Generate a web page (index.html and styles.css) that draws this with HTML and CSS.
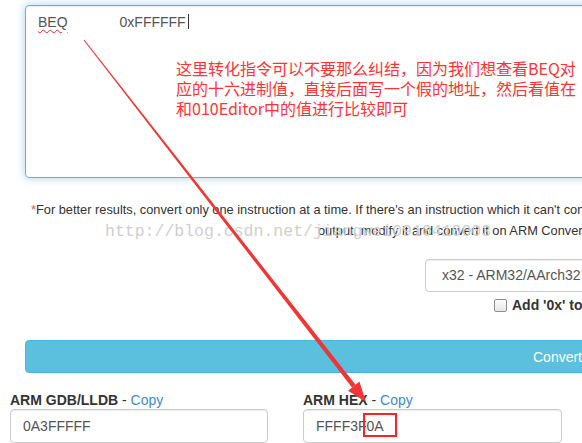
FILE: index.html
```html
<!DOCTYPE html>
<html lang="zh-CN">
<head>
<meta charset="utf-8">
<title>ARM Converter</title>
<link rel="stylesheet" href="styles.css">
</head>
<body>
<div class="page">
  <div class="editor">
    <div class="code"><span class="misspelled">BEQ</span><span class="operand">0xFFFFFF</span><span class="caret"></span></div>
  </div>
  <div class="tip">
    <div class="tip-line first"><span class="star">*</span>For better results, convert only one instruction at a time. If there's an instruction which it can't convert, please try to convert it in another way and check the</div>
    <div class="tip-line second">output, modify it and convert it on ARM Converter again.</div>
  </div>
  <div class="options">
    <div class="select">x32 - ARM32/AArch32</div>
    <label class="check"><span class="box"></span>Add '0x' to the output</label>
  </div>
  <button class="convert">Convert</button>
  <div class="results">
    <div class="field">
      <div class="label"><b>ARM GDB/LLDB</b> - <a class="copy">Copy</a></div>
      <div class="output">0A3FFFFF</div>
    </div>
    <div class="field">
      <div class="label"><b>ARM HEX</b> - <a class="copy">Copy</a></div>
      <div class="output">FFFF3F<span class="mark">0A</span></div>
    </div>
  </div>
</div>
<div class="watermark">http://blog.csdn.net/jiangwei0910410003</div>
<div class="note">这里转化指令可以不要那么纠结，因为我们想查看BEQ对<br>应的十六进制值，直接后面写一个假的地址，然后看值在<br>和010Editor中的值进行比较即可</div>
<svg class="arrow" width="582" height="443" viewBox="0 0 582 443">
  <polygon points="84.4,39.7 83.6,40.3 352.0,387.6 355.6,384.7" fill="#f03535"/>
  <polygon points="366,402 359.4,381.6 348.0,390.8" fill="#f03535"/>
</svg>
</body>
</html>
```
FILE: styles.css
```css
html, body {
  margin: 0;
  padding: 0;
  overflow: hidden;
  background: #fff;
  font-family: "Liberation Sans", Arial, sans-serif;
}
body {
  width: 582px;
  height: 443px;
}
.page {
  width: 582px;
  height: 443px;
  overflow: hidden;
}
.editor {
  margin: 5px 0 0 25px;
  width: 700px;
  height: 173px;
  box-sizing: border-box;
  border: 1px solid #66afe9;
  border-radius: 4px;
  box-shadow: inset 0 1px 1px rgba(0,0,0,.075), 0 0 8px rgba(102,175,233,.6);
  padding: 6px 12px;
  font-size: 14px;
  line-height: 20px;
  color: #555;
}
.code {
  white-space: nowrap;
}
.misspelled {
  text-decoration: underline wavy #e22;
  text-decoration-thickness: 1px;
  text-underline-offset: 2px;
}
.operand {
  margin-left: 52px;
}
.caret {
  display: inline-block;
  width: 1px;
  height: 15px;
  margin-left: 2px;
  background: #333;
  vertical-align: -2px;
}
.tip {
  margin-top: 21px;
  font-size: 12.8px;
  line-height: 21px;
  color: #333;
  white-space: nowrap;
}
.tip-line.first {
  padding-left: 31px;
}
.tip-line.second {
  padding-left: 318px;
}
.star {
  color: #e0505a;
}
.options {
  margin-top: 18px;
  display: flex;
  flex-direction: column;
  align-items: flex-start;
}
.select {
  margin-left: 425px;
  width: 220px;
  height: 33px;
  box-sizing: border-box;
  border: 1px solid #ccc;
  border-radius: 4px;
  padding: 0 16px;
  font-size: 14px;
  line-height: 31px;
  color: #555;
  white-space: nowrap;
  box-shadow: inset 0 1px 1px rgba(0,0,0,.075);
}
.check {
  margin: 5px 0 0 494px;
  display: flex;
  align-items: center;
  gap: 5px;
  font-size: 14px;
  font-weight: bold;
  line-height: 16px;
  color: #333;
  white-space: nowrap;
}
.box {
  width: 11px;
  height: 11px;
  border: 1px solid #8e8e8e;
  border-radius: 2px;
  background: linear-gradient(#fcfcfc, #e6e6e6);
}
.convert {
  display: block;
  margin: 27px 0 0 25px;
  width: 1065px;
  height: 33px;
  padding: 0;
  background: #5bc0de;
  border: 1px solid #46b8da;
  border-radius: 4px;
  color: #fff;
  font-family: "Liberation Sans", Arial, sans-serif;
  font-size: 14px;
  text-align: center;
}
.results {
  margin-top: 18px;
  padding-left: 10px;
  display: grid;
  grid-template-columns: 258px 259px;
  column-gap: 35px;
}
.label {
  font-size: 14px;
  line-height: 18px;
  color: #333;
  white-space: nowrap;
}
.copy {
  color: #428bca;
}
.output {
  height: 34px;
  box-sizing: border-box;
  border: 1px solid #ccc;
  border-radius: 4px;
  padding: 6px 12px;
  font-size: 14px;
  line-height: 20px;
  color: #555;
  box-shadow: inset 0 1px 1px rgba(0,0,0,.075);
}
.mark {
  position: relative;
}
.mark::after {
  content: "";
  position: absolute;
  left: -4px;
  right: -13px;
  top: -5px;
  bottom: -3px;
  border: 2px solid #f22;
}
.watermark {
  position: absolute;
  left: 105px;
  top: 222px;
  font-family: "Liberation Mono", "Courier New", monospace;
  font-size: 16.5px;
  line-height: 20px;
  color: #cfcfcf;
  white-space: nowrap;
}
.note {
  position: absolute;
  left: 176px;
  top: 58px;
  font-family: "Noto Sans CJK SC", sans-serif;
  font-size: 16px;
  line-height: 20px;
  color: #f33;
  white-space: nowrap;
}
.arrow {
  position: absolute;
  left: 0;
  top: 0;
  pointer-events: none;
}
```
